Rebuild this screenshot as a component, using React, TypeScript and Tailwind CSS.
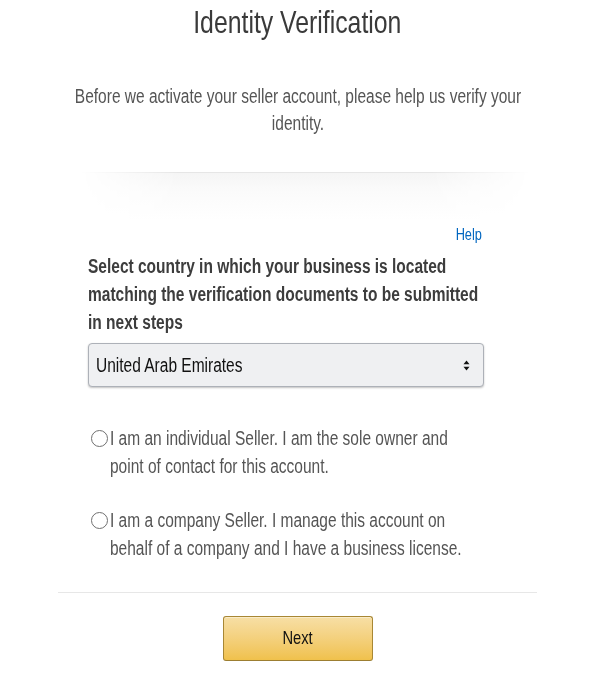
import { useState, type ReactNode } from 'react';

const font = { fontFamily: '"Liberation Sans", Arial, sans-serif' };

// The screenshot's font renders narrow, so text is squeezed horizontally.
function Narrow({ children, className = '' }: { children: ReactNode; className?: string }) {
  return <span className={`inline-block scale-x-[0.775] ${className}`}>{children}</span>;
}

const options = [
  { id: 'individual', text: 'I am an individual Seller. I am the sole owner and point of contact for this account.' },
  { id: 'company', text: 'I am a company Seller. I manage this account on behalf of a company and I have a business license.' },
];

export default function App() {
  const [sellerType, setSellerType] = useState<string>('');

  return (
    <div className="min-h-[684px] w-[589px] overflow-hidden bg-white text-[#333]" style={font}>
      <div className="pl-[6px]">
        <h1 className="flex justify-center pt-[4px] text-[32px] leading-[36px] text-[#3a3a3a]">
          <Narrow className="shrink-0 whitespace-nowrap">Identity Verification</Narrow>
        </h1>

        <div className="mt-[43px] flex justify-center">
          <p className="w-[590px] shrink-0 scale-x-[0.775] text-center text-[20px] leading-[27px] text-[#555]">
            Before we activate your seller account, please help us verify your identity.
          </p>
        </div>
      </div>

      {/* section divider shadow */}
      <div className="ml-[80px] mt-[35px] h-[48px] w-[450px] [mask-image:linear-gradient(to_right,transparent,black_22%,black_78%,transparent)]">
        <div className="h-px bg-[#e6e6e6]" />
        <div className="h-[47px] bg-gradient-to-b from-[#f5f5f5] via-[#fbfbfb] via-40% to-white" />
      </div>

      <div className="ml-[88px] w-[396px]">
        <div className="mt-[4px] flex h-[20px] justify-end pr-[2px] text-[16.5px] leading-[20px]">
          <a href="#" className="text-[#0066c0]">
            <Narrow className="origin-right">Help</Narrow>
          </a>
        </div>

        <label className="mt-[8px] block w-[511px] origin-left scale-x-[0.775] text-[20px] font-bold leading-[28px] text-[#3d3d3d]">
          Select country in which your business is located matching the verification documents to be submitted in next steps
        </label>

        <div className="mt-[7px] flex h-[44px] items-center justify-between rounded-[4px] border border-[#adb1b8] bg-[#eff0f2] pl-[7px] pr-[13px] shadow-[0_1px_2px_rgba(15,17,17,0.25)]">
          <Narrow className="origin-left whitespace-nowrap text-[20px] leading-[28px] text-[#111]">United Arab Emirates</Narrow>
          <svg width="7" height="11" viewBox="0 0 7 11">
            <path d="M3.5 0.5 L6.5 4.2 H0.5 Z" fill="#111" />
            <path d="M3.5 10.5 L6.5 6.8 H0.5 Z" fill="#111" />
          </svg>
        </div>

        <div className="mt-[37px] flex flex-col gap-[26px]">
          {options.map((opt) => (
            <label key={opt.id} className="flex cursor-pointer items-start" onClick={() => setSellerType(opt.id)}>
              <span className="ml-[3px] mt-[6px] flex h-[17px] w-[17px] shrink-0 items-center justify-center rounded-full border border-[#707070] bg-white">
                {sellerType === opt.id && <span className="h-[8px] w-[8px] rounded-full bg-[#333]" />}
              </span>
              <span className="ml-[2px] w-[471px] shrink-0 origin-left scale-x-[0.775] text-[20px] leading-[28px] text-[#555]">
                {opt.text}
              </span>
            </label>
          ))}
        </div>
      </div>

      <div className="ml-[58px] mt-[30px] h-px w-[479px] bg-[#e7e7e7]" />

      <div className="mt-[23px] flex justify-center pl-[6px]">
        <button className="flex h-[45px] w-[150px] items-center justify-center rounded-[3px] border border-[#a88734] border-b-[#9c7e31] bg-gradient-to-b from-[#f7dfa5] to-[#f0c14b] text-[19px] text-[#111] shadow-[inset_0_1px_0_rgba(255,255,255,0.4)]">
          <Narrow>Next</Narrow>
        </button>
      </div>
    </div>
  );
}
